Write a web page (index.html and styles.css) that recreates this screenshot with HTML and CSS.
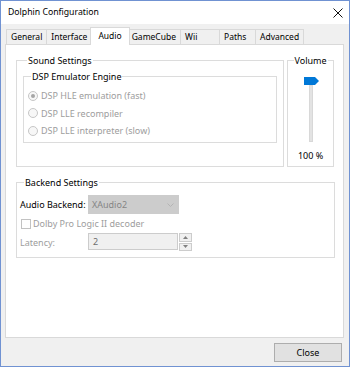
FILE: index.html
```html
<!DOCTYPE html>
<html lang="en">
<head>
    <meta charset="UTF-8">
    <title>Dolphin Configuration</title>
    <link rel="stylesheet" href="styles.css">
</head>
<body>
    <div class="window">
        <div class="titlebar">
            <span class="title">Dolphin Configuration</span>
            <svg class="close-x" width="10" height="10" viewBox="0 0 10 10">
                <path d="M0.5 0.5 L9.5 9.5 M9.5 0.5 L0.5 9.5" stroke="#111" stroke-width="1" fill="none"/>
            </svg>
        </div>
        <div class="client">
            <div class="tabs">
                <div class="tab">General</div>
                <div class="tab">Interface</div>
                <div class="tab active">Audio</div>
                <div class="tab">GameCube</div>
                <div class="tab tab-wide">Wii</div>
                <div class="tab">Paths</div>
                <div class="tab">Advanced</div>
            </div>
            <div class="panel">
                <div class="top-row">
                    <fieldset class="group sound">
                        <legend>Sound Settings</legend>
                        <fieldset class="group dsp">
                            <legend>DSP Emulator Engine</legend>
                            <div class="radio checked"><span class="radio-dot"></span>DSP HLE emulation (fast)</div>
                            <div class="radio"><span class="radio-dot"></span>DSP LLE recompiler</div>
                            <div class="radio"><span class="radio-dot"></span>DSP LLE interpreter (slow)</div>
                        </fieldset>
                    </fieldset>
                    <fieldset class="group volume">
                        <legend class="legend-center">Volume</legend>
                        <svg class="thumb" width="15" height="8" viewBox="0 0 15 8">
                            <path d="M0 0 H11 L15 4 L11 8 H0 Z" fill="#0078d7"/>
                        </svg>
                        <div class="track"></div>
                        <div class="volume-value">100 %</div>
                    </fieldset>
                </div>
                <fieldset class="group backend">
                    <legend>Backend Settings</legend>
                    <div class="backend-grid">
                        <span>Audio Backend:</span>
                        <div class="select">
                            <span>XAudio2</span>
                            <svg width="7" height="4" viewBox="0 0 7 4">
                                <path d="M0.5 0.5 L3.5 3.5 L6.5 0.5" stroke="#b4b4b4" fill="none"/>
                            </svg>
                        </div>
                        <div class="check-row">
                            <span class="checkbox"></span>Dolby Pro Logic II decoder
                        </div>
                        <span class="muted">Latency:</span>
                        <div class="spin">
                            <div class="spin-field">2</div>
                            <div class="spin-buttons">
                                <div class="spin-btn">
                                    <svg width="5" height="3" viewBox="0 0 5 3"><path d="M2.5 0 L5 3 H0 Z" fill="#808080"/></svg>
                                </div>
                                <div class="spin-btn">
                                    <svg width="5" height="3" viewBox="0 0 5 3"><path d="M0 0 H5 L2.5 3 Z" fill="#808080"/></svg>
                                </div>
                            </div>
                        </div>
                    </div>
                </fieldset>
            </div>
            <div class="footer">
                <button class="btn">Close</button>
            </div>
        </div>
    </div>
</body>
</html>
```

FILE: styles.css
```css
* {
    box-sizing: border-box;
}
body {
    margin: 0;
    font-family: "Noto Sans", "DejaVu Sans", sans-serif;
    font-size: 9px;
    line-height: 13px;
    color: #000;
}
.window {
    width: 350px;
    height: 367px;
    border: 1px solid #7092d2;
    background-color: #f0f0f0;
    display: flex;
    flex-direction: column;
}
.titlebar {
    height: 23px;
    flex: none;
    background-color: #fff;
    display: flex;
    align-items: center;
    justify-content: space-between;
    padding: 0 6px 0 7px;
}
.title {
    font-size: 8.7px;
}
.client {
    flex: 1;
    display: flex;
    flex-direction: column;
    padding: 3px 5px 0 4px;
}
.tabs {
    display: flex;
    align-items: flex-end;
    height: 17px;
    padding-left: 1px;
    font-size: 8.5px;
}
.tab {
    min-width: 37px;
    height: 15px;
    line-height: 14px;
    padding: 0 4px;
    margin-left: -1px;
    background-color: #f0f0f0;
    border: 1px solid #d9d9d9;
    border-bottom: none;
}
.tab:first-child {
    margin-left: 0;
}
.tab-wide {
    min-width: 40px;
}
.tab.active {
    position: relative;
    z-index: 1;
    height: 18px;
    line-height: 15px;
    padding: 0 7px;
    margin: 0 -2px -1px -2px;
    background-color: #fff;
}
.panel {
    flex: none;
    height: 294px;
    background-color: #fff;
    border: 1px solid #d9d9d9;
    padding: 9px 9px 0 10px;
}
.top-row {
    display: flex;
    gap: 3px;
}
.group {
    margin: 0;
    min-width: 0;
    border: 1px solid #dcdcdc;
    padding: 0;
}
.group legend {
    padding: 0 1px;
    margin-left: 4px;
}
.sound {
    width: 269px;
    height: 113px;
    padding: 0 6px;
}
.dsp {
    height: 73px;
    margin-top: 3px;
    padding: 4px 3px 0;
}
.radio {
    display: flex;
    align-items: center;
    gap: 3px;
    height: 17.5px;
    color: #9d9d9d;
}
.radio-dot {
    width: 10px;
    height: 10px;
    margin-left: 1px;
    border: 1px solid #c6c6c6;
    border-radius: 50%;
    background-color: #f7f7f7;
    display: flex;
    align-items: center;
    justify-content: center;
}
.radio.checked .radio-dot::after {
    content: "";
    width: 4px;
    height: 4px;
    border-radius: 50%;
    background-color: #a6a6a6;
}
.volume {
    width: 47px;
    height: 113px;
    display: flex;
    flex-direction: column;
    align-items: center;
}
.group .legend-center {
    margin: 0 auto;
}
.thumb {
    display: block;
    margin-top: 10px;
    margin-left: 1px;
}
.track {
    width: 4px;
    height: 57px;
    background-color: #e3e3e3;
    border: 1px solid #d8d8d8;
}
.volume-value {
    margin-top: 7px;
}
.backend {
    width: 319px;
    height: 82px;
    margin-top: 9px;
    padding: 6px 3px 0;
}
.backend-grid {
    display: grid;
    grid-template-columns: 68px auto;
    grid-template-rows: 19px 19px 18px;
    align-items: center;
}
.select {
    width: 91px;
    height: 19px;
    background-color: #cccccc;
    border: 1px solid #cccccc;
    color: #858585;
    display: flex;
    align-items: center;
    justify-content: space-between;
    padding: 0 4px 0 3px;
}
.check-row {
    grid-column: 1 / -1;
    display: flex;
    align-items: center;
    gap: 2px;
    color: #9d9d9d;
}
.checkbox {
    width: 10px;
    height: 10px;
    margin-left: 1px;
    border: 1px solid #c2c2c2;
    background-color: #fff;
}
.muted {
    color: #9d9d9d;
}
.spin {
    display: flex;
    align-items: flex-start;
    gap: 1px;
}
.spin-field {
    width: 90px;
    height: 17px;
    line-height: 15px;
    padding-left: 4px;
    color: #6d6d6d;
    background-color: #f0f0f0;
    border: 1px solid #cccccc;
}
.spin-buttons {
    width: 13px;
    height: 18px;
    display: flex;
    flex-direction: column;
    gap: 1px;
}
.spin-btn {
    flex: 1;
    display: flex;
    align-items: center;
    justify-content: center;
    background-color: #f0f0f0;
    border: 1px solid #cccccc;
}
.footer {
    display: flex;
    justify-content: flex-end;
    padding: 5px 2px 0 0;
}
.btn {
    width: 68px;
    height: 19px;
    padding: 0;
    font: inherit;
    color: #000;
    background-color: #e1e1e1;
    border: 1px solid #adadad;
}
```
